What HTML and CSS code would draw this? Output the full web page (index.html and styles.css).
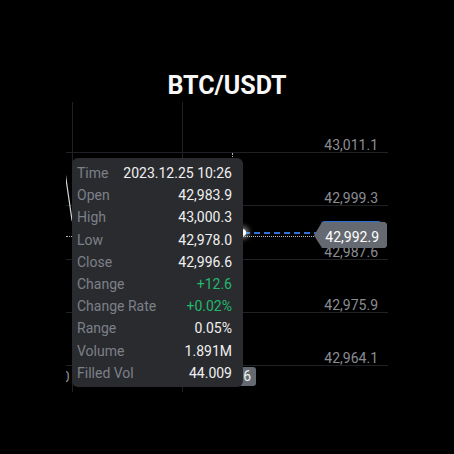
FILE: index.html
```html
<!DOCTYPE html>
<html>
<head>
<meta charset="utf-8">
<link rel="stylesheet" href="styles.css">
</head>
<body>
<h1 class="title">BTC/USDT</h1>
<div class="chart">
  <div class="grid">
    <div class="row first"><span class="axis">43,011.1</span></div>
    <div class="row"><span class="axis">42,999.3</span></div>
    <div class="row"><span class="axis">42,987.6</span></div>
    <div class="row"><span class="axis">42,975.9</span></div>
    <div class="row"><span class="axis">42,964.1</span></div>
  </div>
  <div class="vline v1"></div>
  <div class="vline v2"></div>
  <svg class="series" width="322" height="290" viewBox="0 0 322 290">
    <polyline points="-1,70 6,118 20,150" fill="none" stroke="#d8d8d8" stroke-width="1.2"/>
  </svg>
  <span class="xlabel">0</span>
  <div class="cross-h"></div>
  <div class="cross-v"></div>
  <div class="last-line"></div>
  <div class="dot"></div>
  <div class="price-cap"></div>
  <div class="price-tag">42,992.9</div>
  <div class="time-tag">6</div>
  <div class="tooltip">
    <div class="tip-row"><span class="k">Time</span><span class="v">2023.12.25 10:26</span></div>
    <div class="tip-row"><span class="k">Open</span><span class="v">42,983.9</span></div>
    <div class="tip-row"><span class="k">High</span><span class="v">43,000.3</span></div>
    <div class="tip-row"><span class="k">Low</span><span class="v">42,978.0</span></div>
    <div class="tip-row"><span class="k">Close</span><span class="v">42,996.6</span></div>
    <div class="tip-row"><span class="k">Change</span><span class="v up">+12.6</span></div>
    <div class="tip-row"><span class="k">Change Rate</span><span class="v up">+0.02%</span></div>
    <div class="tip-row"><span class="k">Range</span><span class="v">0.05%</span></div>
    <div class="tip-row"><span class="k">Volume</span><span class="v">1.891M</span></div>
    <div class="tip-row"><span class="k">Filled Vol</span><span class="v">44.009</span></div>
  </div>
</div>
</body>
</html>
```
FILE: styles.css
```css
html, body {
  margin: 0;
  padding: 0;
  background: #000;
}
body {
  width: 454px;
  height: 454px;
  overflow: hidden;
  padding-top: 71px;
  box-sizing: border-box;
  font-family: Roboto, "Noto Sans", sans-serif;
}
.title {
  margin: 0;
  font-size: 25px;
  line-height: 30px;
  font-weight: 700;
  color: #f7f7f7;
  text-align: center;
}
.chart {
  position: relative;
  margin: 1px 0 0 66px;
  width: 322px;
  height: 290px;
  overflow: hidden;
}
.grid {
  display: flex;
  flex-direction: column;
}
.row {
  height: 53.25px;
  box-sizing: border-box;
  border-bottom: 1px solid #202124;
  display: flex;
  justify-content: flex-end;
  align-items: flex-end;
  padding-right: 10px;
}
.row.first {
  height: 51px;
}
.axis {
  font-size: 14px;
  line-height: 14px;
  color: #8a8d93;
}
.vline {
  position: absolute;
  top: 0;
  bottom: 0;
  width: 1px;
  background: #202124;
}
.v1 { left: 6px; }
.v2 { left: 116px; }
.series {
  position: absolute;
  left: 0;
  top: 0;
}
.xlabel {
  position: absolute;
  left: -4.3px;
  top: 266px;
  font-size: 14px;
  line-height: 19px;
  color: #8a8d93;
  white-space: nowrap;
}
.cross-h {
  position: absolute;
  left: 0;
  top: 134px;
  width: 250px;
  border-top: 1px dotted #b8b8b8;
}
.cross-v {
  position: absolute;
  left: 166px;
  top: 51px;
  height: 214px;
  border-left: 1px dotted #b8b8b8;
}
.last-line {
  position: absolute;
  left: 178px;
  top: 129.5px;
  width: 72px;
  height: 2px;
  background: repeating-linear-gradient(90deg, #2f6fd8 0 6px, transparent 6px 10px);
}
.dot {
  position: absolute;
  left: 172.5px;
  top: 126.5px;
  width: 7px;
  height: 7px;
  border-radius: 50%;
  background: #fff;
  box-shadow: 0 0 5px 3px rgba(255, 255, 255, 0.45);
}
.price-cap {
  position: absolute;
  left: 255px;
  top: 119px;
  width: 61px;
  height: 6px;
  box-sizing: border-box;
  border: 1.5px solid #2f6fd8;
  border-bottom: none;
  border-radius: 4px 4px 0 0;
}
.price-tag {
  position: absolute;
  left: 248px;
  top: 120px;
  width: 73px;
  height: 26px;
  box-sizing: border-box;
  padding: 2px 8px 0 0;
  text-align: right;
  font-size: 14px;
  line-height: 26px;
  color: #fff;
  background: #656a72;
  clip-path: polygon(0 52%, 8px 0, calc(100% - 2px) 0, 100% 2px, 100% calc(100% - 2px), calc(100% - 2px) 100%, 8px 100%);
  overflow: hidden;
}
.time-tag {
  position: absolute;
  right: 132px;
  top: 265px;
  height: 19px;
  padding: 0 5px 0 36px;
  border-radius: 3px;
  background: #656a72;
  color: #f0f0f0;
  font-size: 14px;
  line-height: 19px;
  white-space: nowrap;
}
.tooltip {
  position: absolute;
  left: 6px;
  top: 56px;
  width: 171px;
  height: 229px;
  box-sizing: border-box;
  padding: 4px 11px 0 5px;
  background: #2a2b2f;
  border-radius: 6px;
  display: flex;
  flex-direction: column;
}
.tip-row {
  display: flex;
  justify-content: space-between;
  font-size: 14px;
  line-height: 22.2px;
  white-space: nowrap;
}
.k { color: #7c8088; }
.v { color: #f0f0f0; }
.v.up { color: #22b96c; }
```
